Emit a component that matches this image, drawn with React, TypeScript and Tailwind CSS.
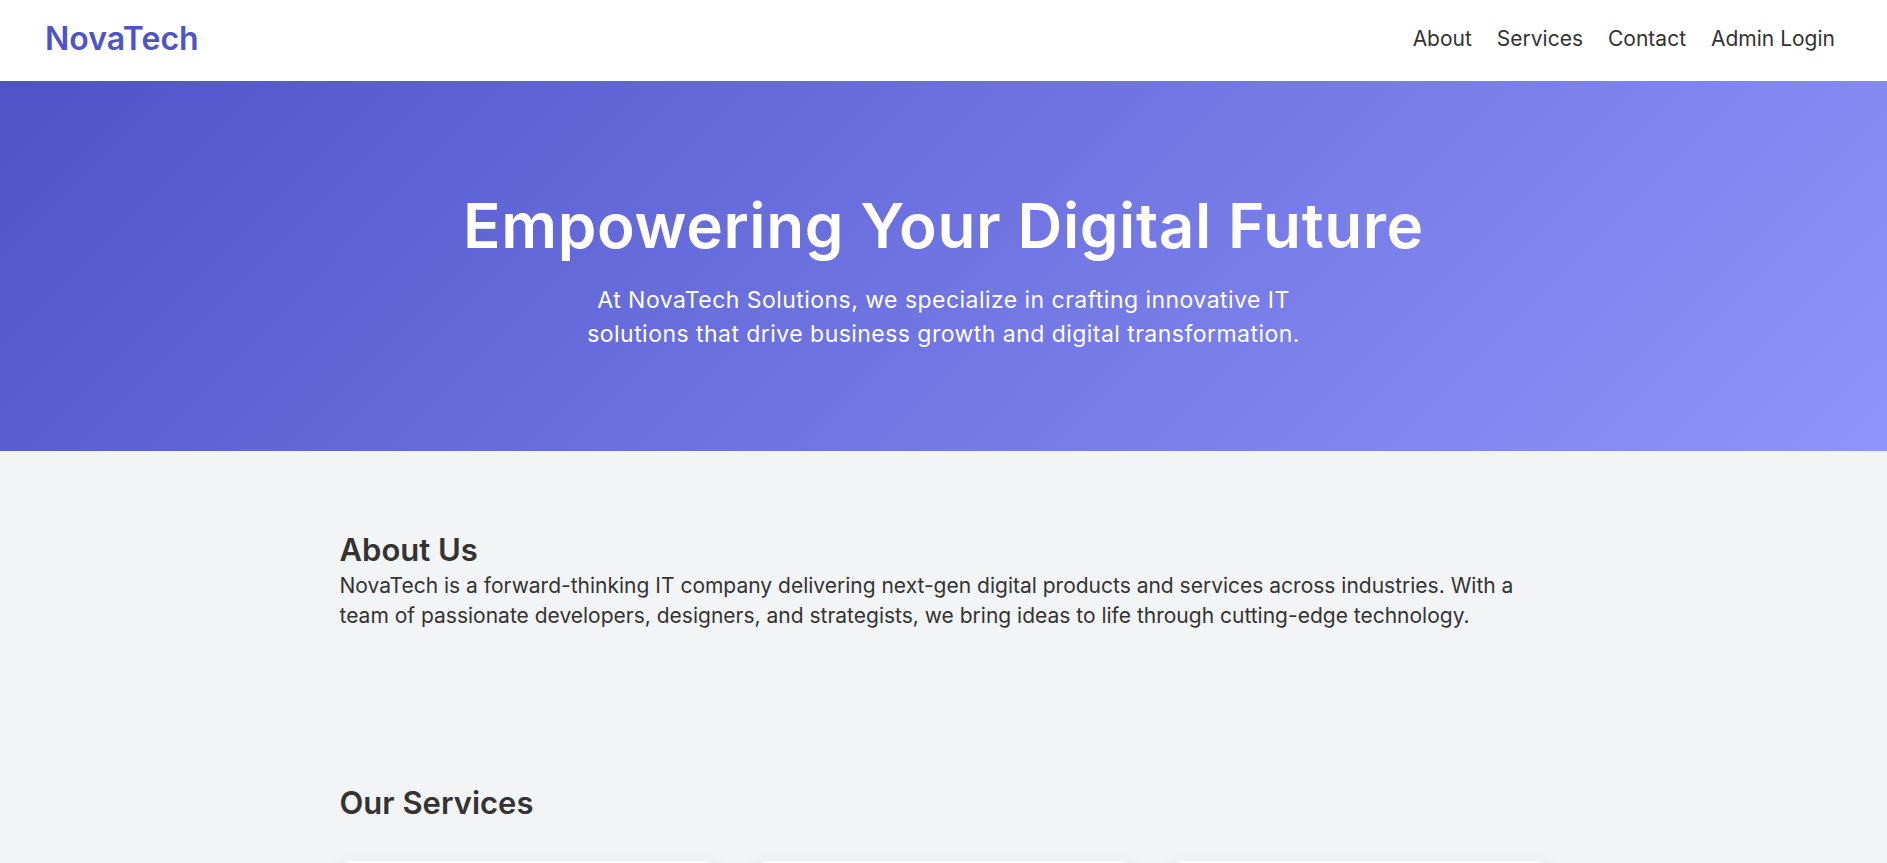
const links = ['About', 'Services', 'Contact', 'Admin Login'];

const services = [
  { title: 'Web Development', text: 'Modern, responsive websites and web apps built for performance.' },
  { title: 'Cloud Solutions', text: 'Scalable infrastructure and migration to the cloud.' },
  { title: 'Mobile Apps', text: 'Native and cross-platform apps for iOS and Android.' },
];

export default function App() {
  return (
    <div className="min-h-screen bg-[#f3f4f6] font-['Inter',sans-serif] text-[#333]">
      {/* Header */}
      <header className="flex h-[81px] items-center justify-between bg-white pb-[3px] pl-[45px] pr-[52px]">
        <span className="text-[32px] font-semibold text-[#4e54c8]">NovaTech</span>
        <nav className="flex items-center gap-[25px] text-[21px] text-[#333]">
          {links.map((link) => (
            <a key={link} href="#" className="hover:text-[#4e54c8]">
              {link}
            </a>
          ))}
        </nav>
      </header>

      {/* Hero */}
      <section className="flex h-[370px] flex-col items-center bg-[linear-gradient(135deg,#4e54c8,#8f94fb)] pt-[108px] text-center text-white">
        <h1 className="text-[62px] font-semibold leading-[1.2] tracking-[0.01em]">Empowering Your Digital Future</h1>
        <p className="mt-[20px] text-[23px] leading-[34px] tracking-[0.02em]">
          At NovaTech Solutions, we specialize in crafting innovative IT
          <br />
          solutions that drive business growth and digital transformation.
        </p>
      </section>

      {/* About */}
      <section className="mx-auto max-w-[1208px] pt-20 pb-[153px]">
        <h2 className="text-[31px] font-semibold leading-[1.2]">About Us</h2>
        <p className="mt-[3px] text-[21px] leading-[30px]">
          NovaTech is a forward-thinking IT company delivering next-gen digital products and services across industries. With a team of passionate developers, designers, and strategists, we bring ideas to life through cutting-edge technology.
        </p>
      </section>

      {/* Services */}
      <section className="mx-auto max-w-[1208px] pb-20">
        <h2 className="text-[31px] font-semibold leading-[1.2]">Our Services</h2>
        <div className="mt-10 grid grid-cols-3 gap-10">
          {services.map((s) => (
            <div key={s.title} className="rounded-xl bg-white p-8 shadow-[0_4px_20px_rgba(0,0,0,0.06)]">
              <h3 className="text-[22px] font-semibold">{s.title}</h3>
              <p className="mt-3 text-[17px] leading-[28px] text-[#555]">{s.text}</p>
            </div>
          ))}
        </div>
      </section>
    </div>
  );
}
